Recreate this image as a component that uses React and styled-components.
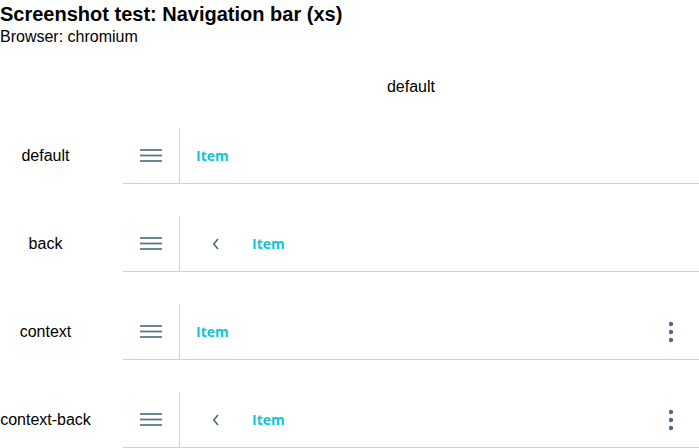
import React from "react";
import styled, { createGlobalStyle } from "styled-components";

const Global = createGlobalStyle`
  html, body { margin: 0; padding: 0; background: #fff; }
  body { font-family: "Liberation Sans", Arial, sans-serif; color: #000; }
`;

const Title = styled.h1`
  margin: 0;
  font-size: 20px;
  font-weight: bold;
  line-height: 28px;
`;

const Sub = styled.div`
  font-size: 16px;
  line-height: 18px;
`;

const Grid = styled.div`
  display: grid;
  grid-template-columns: 123px 576px;
  grid-template-rows: 50px;
  grid-auto-rows: 56px;
  row-gap: 32px;
`;

const Head = styled.div`
  grid-column: 2;
  text-align: center;
  font-size: 16px;
  line-height: 18px;
  padding-top: 32px;
`;

const Label = styled.div`
  display: flex;
  align-items: center;
  justify-content: center;
  width: 91px;
  font-size: 16px;
`;

const Bar = styled.nav`
  display: flex;
  align-items: stretch;
  height: 56px;
  box-sizing: border-box;
  border-bottom: 1px solid #cbd3db;
`;

const Menu = styled.div`
  width: 56px;
  flex: none;
  border-right: 1px solid #cbd3db;
  display: flex;
  align-items: center;
  justify-content: center;
  color: #58707f;
`;

const Back = styled.div`
  width: 56px;
  flex: none;
  display: flex;
  align-items: center;
  justify-content: center;
  color: #4e6a82;
  margin-left: 8px;
  margin-right: -8px;
`;

const Item = styled.span`
  display: flex;
  align-items: center;
  padding-left: 16px;
  font-family: "Open Sans", sans-serif;
  font-weight: 700;
  font-size: 14px;
  color: #12c5d3;
  flex: 1;
`;

const Kebab = styled.div`
  width: 56px;
  flex: none;
  display: flex;
  align-items: center;
  justify-content: center;
  color: #4e6a82;
`;

const Hamburger = () => (
  <svg width="22" height="13" viewBox="0 0 22 13">
    <g stroke="currentColor" strokeWidth="1.7">
      <line x1="0" y1="1" x2="22" y2="1" />
      <line x1="0" y1="6.5" x2="22" y2="6.5" />
      <line x1="0" y1="12" x2="22" y2="12" />
    </g>
  </svg>
);

const Chevron = () => (
  <svg width="8" height="12" viewBox="0 0 8 12">
    <path d="M6 1 L1.8 6 L6 11" fill="none" stroke="currentColor" strokeWidth="1.6" />
  </svg>
);

const Dots = () => (
  <svg width="6" height="24" viewBox="0 0 6 24">
    <g fill="currentColor">
      <circle cx="3" cy="4" r="2.2" />
      <circle cx="3" cy="12" r="2.2" />
      <circle cx="3" cy="20" r="2.2" />
    </g>
  </svg>
);

const rows = [
  { name: "default", back: false, ctx: false },
  { name: "back", back: true, ctx: false },
  { name: "context", back: false, ctx: true },
  { name: "context-back", back: true, ctx: true },
];

export default function App() {
  return (
    <>
      <Global />
      <Title>Screenshot test: Navigation bar (xs)</Title>
      <Sub>Browser: chromium</Sub>
      <Grid>
        <Head>default</Head>
        {rows.map((r) => (
          <React.Fragment key={r.name}>
            <Label>{r.name}</Label>
            <Bar>
              <Menu><Hamburger /></Menu>
              {r.back && <Back><Chevron /></Back>}
              <Item>Item</Item>
              {r.ctx && <Kebab><Dots /></Kebab>}
            </Bar>
          </React.Fragment>
        ))}
      </Grid>
    </>
  );
}
